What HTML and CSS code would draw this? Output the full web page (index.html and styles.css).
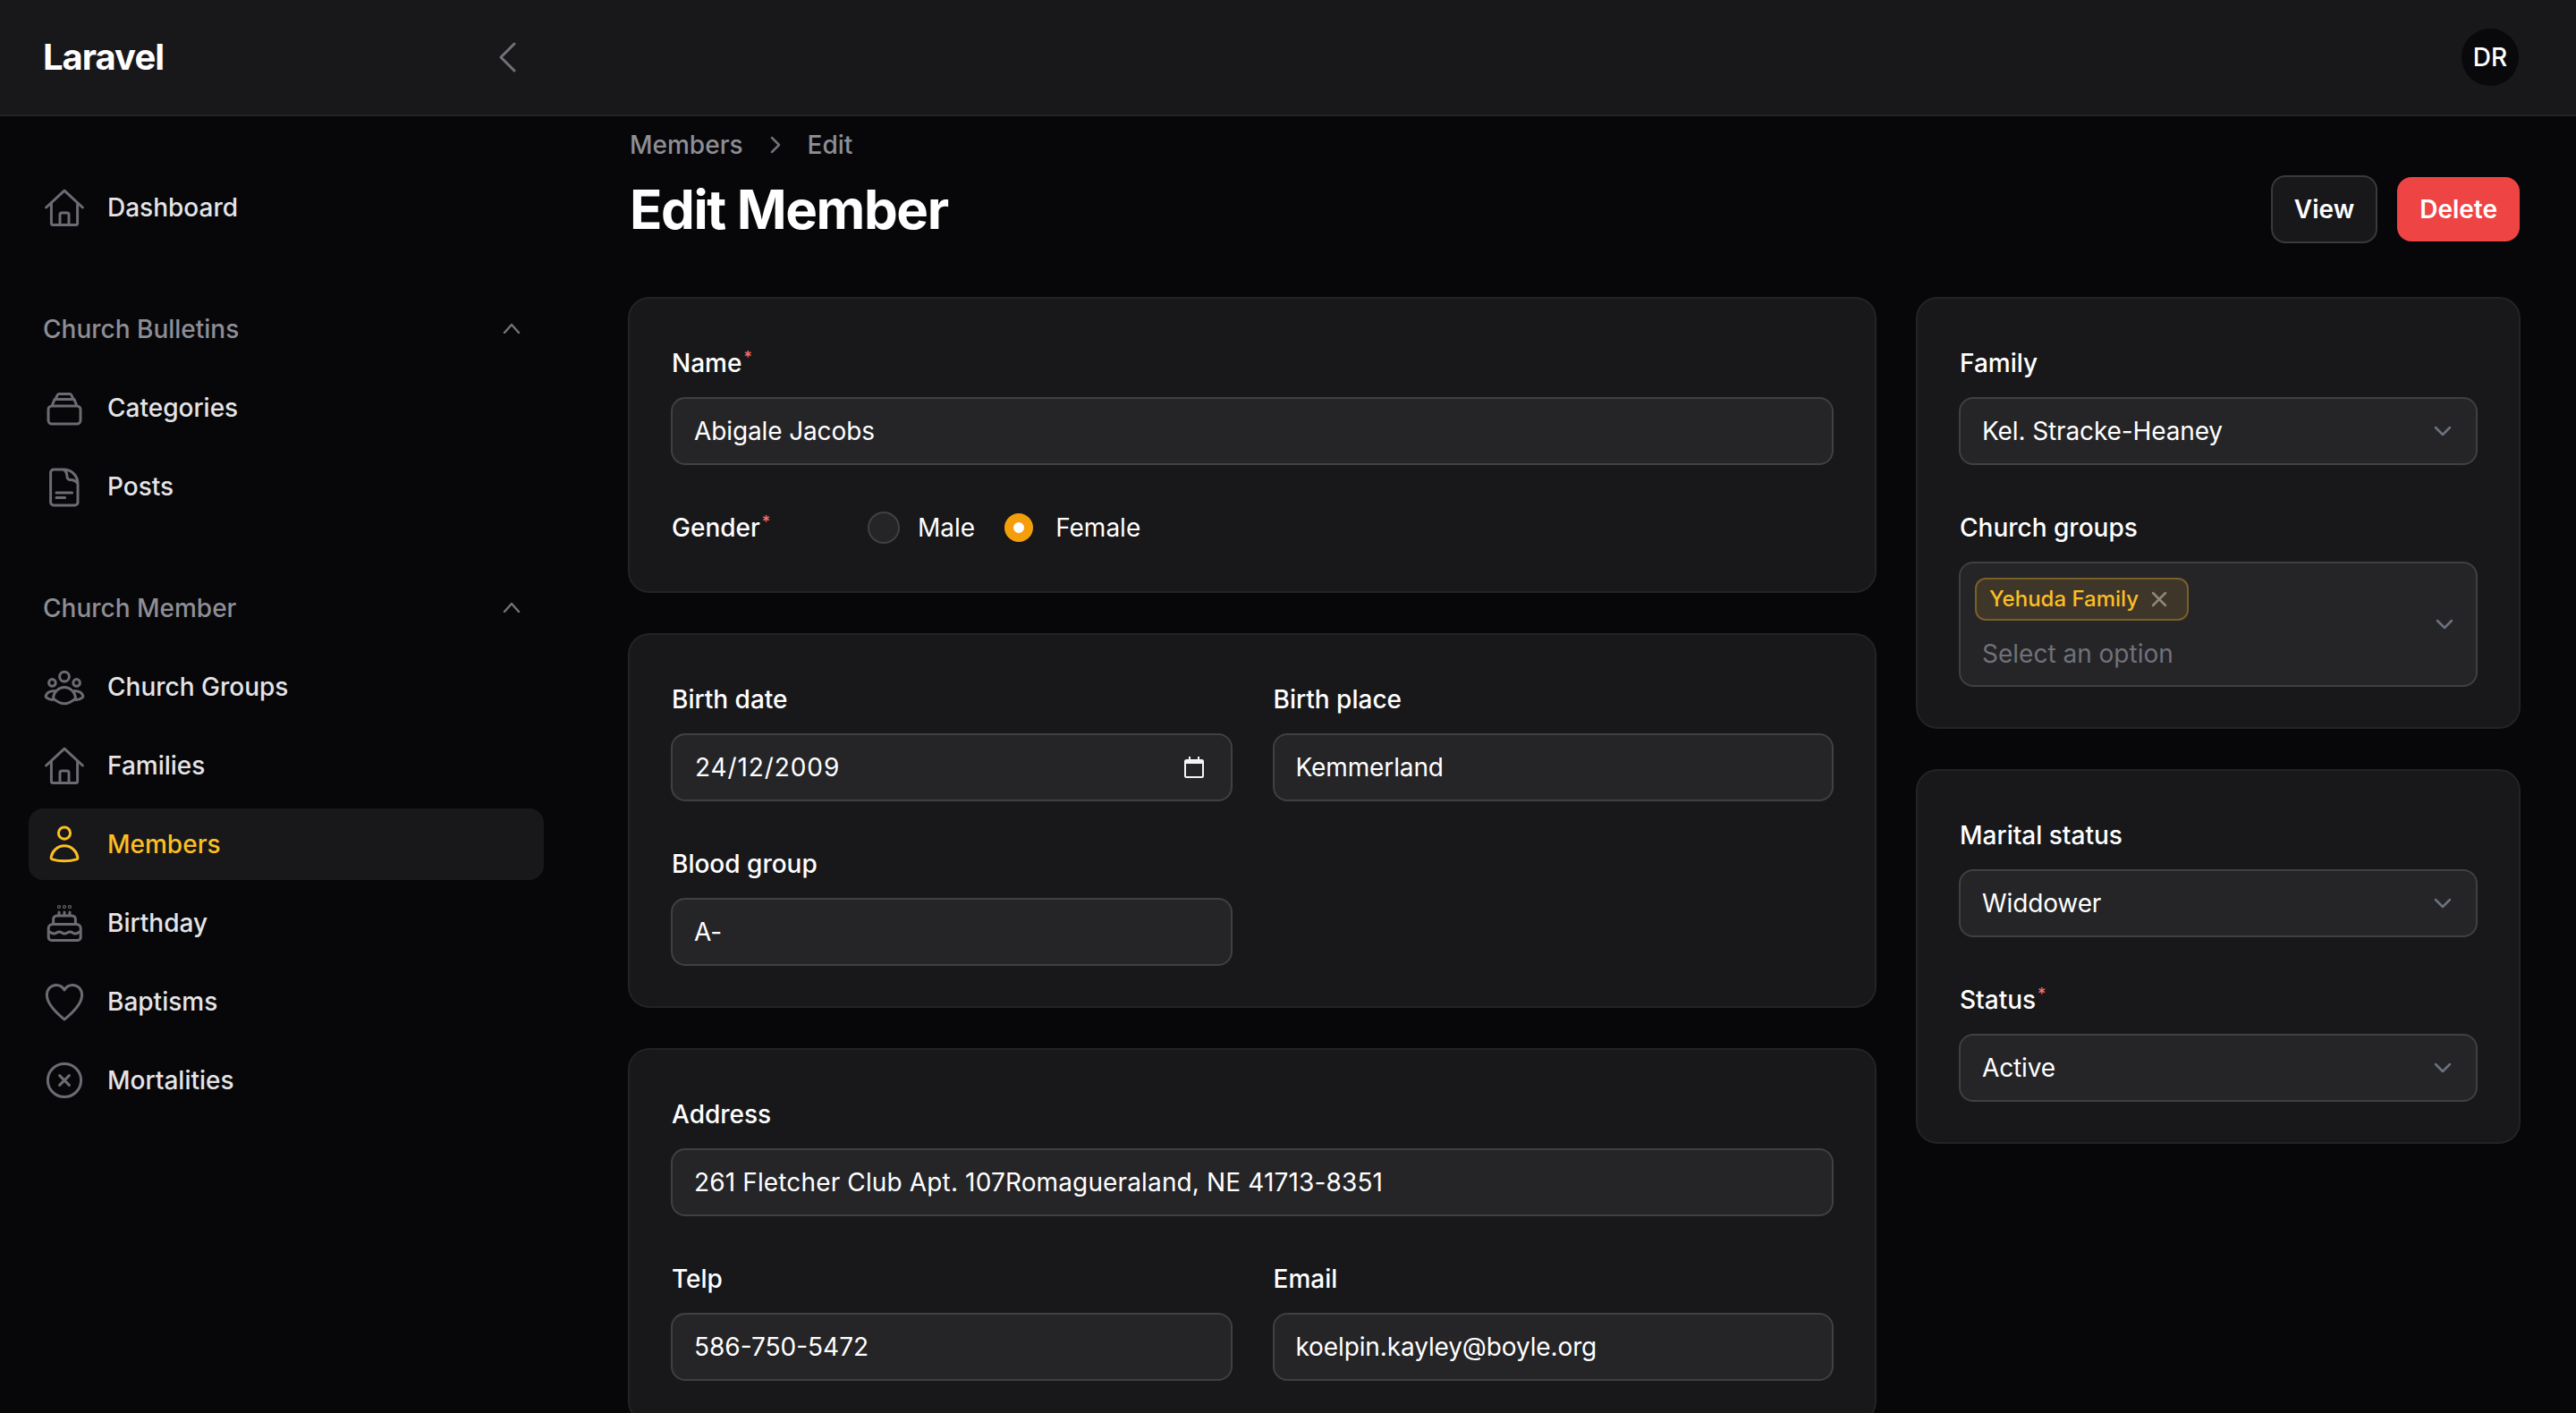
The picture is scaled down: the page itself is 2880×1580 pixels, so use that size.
FILE: index.html
```html
<!DOCTYPE html>
<html lang="en">
<head>
  <meta charset="utf-8">
  <title>Edit Member</title>
  <link rel="stylesheet" href="styles.css">
</head>
<body>
  <header class="topbar">
    <div class="brand">
      <span class="logo">Laravel</span>
      <svg class="collapse" viewBox="0 0 20 34"><path d="M18 2 3 17l15 15"/></svg>
    </div>
    <span class="avatar">DR</span>
  </header>

  <div class="shell">
    <nav class="sidebar">
      <a class="nav-item">
        <svg class="icon" viewBox="0 0 24 24"><path d="M1.8 12 12 2.600 22.200 12M4.700 9.600V20.800a1 1 0 0 0 1 1h12.600a1 1 0 0 0 1-1V9.600M9.500 21.800V16a1 1 0 0 1 1-1h3a1 1 0 0 1 1 1v5.800"/></svg>
        <span>Dashboard</span>
      </a>

      <div class="nav-group">
        <div class="nav-label">
          <span>Church Bulletins</span>
          <svg class="group-toggle" viewBox="0 0 20 12"><path d="m2 11 8-9 8 9"/></svg>
        </div>
        <a class="nav-item">
          <svg class="icon" viewBox="0 0 24 24"><path d="M3 13a2 2 0 0 1 2-2h14a2 2 0 0 1 2 2v6a2 2 0 0 1-2 2H5a2 2 0 0 1-2-2zM5 11l1.500-3.700h11L19 11M7 7.300l1-2.300a1.200 1.200 0 0 1 1-.7h6a1.200 1.200 0 0 1 1 .7l1 2.300"/></svg>
          <span>Categories</span>
        </a>
        <a class="nav-item">
          <svg class="icon" viewBox="0 0 24 24"><path d="M11.500 2.500H6a1.700 1.700 0 0 0-1.700 1.700v16.600A1.700 1.700 0 0 0 6 22.500h11.800a1.700 1.700 0 0 0 1.700-1.700V10.500C19.500 6 16 2.500 11.500 2.500zM11.500 2.500c1.500 1 2 2.500 2 4 0 1 .7 1.800 1.800 1.800 1.500 0 3 .5 4.200 2.200M7.500 15.500h8.800M7.500 18.300h4.800"/></svg>
          <span>Posts</span>
        </a>
      </div>

      <div class="nav-group">
        <div class="nav-label">
          <span>Church Member</span>
          <svg class="group-toggle" viewBox="0 0 20 12"><path d="m2 11 8-9 8 9"/></svg>
        </div>
        <a class="nav-item">
          <svg class="icon" viewBox="0 0 24 24"><circle cx="12" cy="6.300" r="2.700"/><circle cx="5.200" cy="9.700" r="1.900"/><circle cx="18.800" cy="9.700" r="1.900"/><path d="M12 12.300c-3.200 0-5.600 2.400-6.200 5.400-.1.500.1.900.5 1.200 1.600 1.300 3.500 2.500 5.700 2.500s4.100-1.200 5.700-2.500c.4-.3.600-.7.500-1.200-.6-3-3-5.400-6.200-5.400zM6.600 14.300c-2.600 0-4.400 1.200-5 2.700-.1.400 0 .7.3.9 1 .9 2.200 1.300 3.500 1.400M17.400 14.300c2.600 0 4.400 1.200 5 2.700.1.400 0 .7-.3.9-1 .9-2.200 1.300-3.500 1.400"/></svg>
          <span>Church Groups</span>
        </a>
        <a class="nav-item">
          <svg class="icon" viewBox="0 0 24 24"><path d="M1.800 12 12 2.600 22.200 12M4.700 9.600V20.800a1 1 0 0 0 1 1h12.600a1 1 0 0 0 1-1V9.600M9.500 21.800V16a1 1 0 0 1 1-1h3a1 1 0 0 1 1 1v5.800"/></svg>
          <span>Families</span>
        </a>
        <a class="nav-item active">
          <svg class="icon" viewBox="0 0 24 24"><circle cx="12" cy="5.800" r="3.300"/><path d="M12 12.900c-3.800 0-6.900 3-7.400 6.300-.1.600.1 1 .6 1.200 1.800.6 4.300 1 6.800 1s5-.4 6.800-1c.5-.2.700-.6.600-1.200-.5-3.300-3.600-6.300-7.400-6.300z"/></svg>
          <span>Members</span>
        </a>
        <a class="nav-item">
          <svg class="icon" viewBox="0 0 24 24"><path d="M3.100 15a2.300 2.300 0 0 1 2.300-2.300h13.400a2.300 2.300 0 0 1 2.300 2.300v5a1.700 1.700 0 0 1-1.700 1.700H4.800A1.700 1.700 0 0 1 3.100 20zM3.100 17c1.500 0 1.500 1 3 1s1.500-1 3-1 1.500 1 3 1 1.500-1 3-1 1.500 1 3 1 1.500-1 3-1M5.800 12.700V10a2 2 0 0 1 2-2h8.400a2 2 0 0 1 2 2v2.700M9 8V6M12 8V6M15 8V6"/><circle cx="9" cy="3" r=".3"/><circle cx="12" cy="3" r=".3"/><circle cx="15" cy="3" r=".3"/></svg>
          <span>Birthday</span>
        </a>
        <a class="nav-item">
          <svg class="icon" viewBox="0 0 24 24"><path d="M12 22c-1-.9-9.800-7.500-9.800-13.600C2.200 5 4.600 2.700 7.400 2.700c2 0 3.700 1.100 4.600 2.800.9-1.700 2.600-2.800 4.600-2.800 2.800 0 5.200 2.300 5.200 5.700C21.800 14.500 13 21.100 12 22z"/></svg>
          <span>Baptisms</span>
        </a>
        <a class="nav-item">
          <svg class="icon" viewBox="0 0 24 24"><circle cx="12" cy="12" r="9.300"/><path d="m9.300 9.300 5.400 5.400M14.700 9.300l-5.400 5.400"/></svg>
          <span>Mortalities</span>
        </a>
      </div>
    </nav>

    <main class="content">
      <div class="crumbs">
        <span>Members</span>
        <svg class="crumb-sep" viewBox="0 0 12 20"><path d="m2 2 8 8-8 8"/></svg>
        <span>Edit</span>
      </div>
      <div class="title-row">
        <h1>Edit Member</h1>
        <div class="actions">
          <button class="btn btn-view">View</button>
          <button class="btn btn-delete">Delete</button>
        </div>
      </div>

      <div class="columns">
        <div class="stack">
          <section class="card">
            <div class="field">
              <label>Name<sup>*</sup></label>
              <div class="input">Abigale Jacobs</div>
            </div>
            <div class="gender">
              <label>Gender<sup>*</sup></label>
              <span class="radio"></span>
              <span class="radio-text male">Male</span>
              <span class="radio checked"></span>
              <span class="radio-text">Female</span>
            </div>
          </section>

          <section class="card">
            <div class="grid-2">
              <div class="field">
                <label>Birth date</label>
                <div class="input input-date">
                  <span>24/12/2009</span>
                  <svg class="calendar" viewBox="0 0 22 24"><path d="M5 0h2v3h8V0h2v3h2.500A2.500 2.500 0 0 1 22 5.500v16a2.500 2.500 0 0 1-2.500 2.500h-17A2.500 2.500 0 0 1 0 21.500v-16A2.500 2.500 0 0 1 2.500 3H5zM2 8v13.500a.5.500 0 0 0 .5.500h17a.5.500 0 0 0 .5-.5V8z"/></svg>
                </div>
              </div>
              <div class="field">
                <label>Birth place</label>
                <div class="input">Kemmerland</div>
              </div>
              <div class="field">
                <label>Blood group</label>
                <div class="input">A-</div>
              </div>
            </div>
          </section>

          <section class="card">
            <div class="field">
              <label>Address</label>
              <div class="input input-numeric">261 Fletcher Club Apt. 107Romagueraland, NE 41713-8351</div>
            </div>
            <div class="grid-2">
              <div class="field">
                <label>Telp</label>
                <div class="input input-phone">586-750-5472</div>
              </div>
              <div class="field">
                <label>Email</label>
                <div class="input">koelpin.kayley@boyle.org</div>
              </div>
            </div>
          </section>
        </div>

        <div class="stack">
          <section class="card">
            <div class="field">
              <label>Family</label>
              <div class="input select">
                <span>Kel. Stracke-Heaney</span>
                <svg class="select-arrow" viewBox="0 0 20 12"><path d="m2 2 8 8 8-8"/></svg>
              </div>
            </div>
            <div class="field">
              <label>Church groups</label>
              <div class="multi">
                <div class="tag">
                  <span>Yehuda Family</span>
                  <svg class="tag-x" viewBox="0 0 18 18"><path d="m2 2 14 14M16 2 2 16"/></svg>
                </div>
                <span class="placeholder">Select an option</span>
                <svg class="select-arrow multi-arrow" viewBox="0 0 20 12"><path d="m2 2 8 8 8-8"/></svg>
              </div>
            </div>
          </section>

          <section class="card">
            <div class="field">
              <label>Marital status</label>
              <div class="input select">
                <span>Widdower</span>
                <svg class="select-arrow" viewBox="0 0 20 12"><path d="m2 2 8 8 8-8"/></svg>
              </div>
            </div>
            <div class="field">
              <label>Status<sup>*</sup></label>
              <div class="input select">
                <span>Active</span>
                <svg class="select-arrow" viewBox="0 0 20 12"><path d="m2 2 8 8 8-8"/></svg>
              </div>
            </div>
          </section>
        </div>
      </div>
    </main>
  </div>
</body>
</html>
```

FILE: styles.css
```css
* {
  box-sizing: border-box;
}

html, body {
  height: 1580px;
  margin: 0;
  overflow: hidden;
}

body {
  font-family: Inter, "Liberation Sans", sans-serif;
  font-size: 28px;
  line-height: 40px;
  color: #fff;
  background-color: #070709;
}

svg {
  display: block;
  fill: none;
  stroke-linecap: round;
  stroke-linejoin: round;
}

/* top bar */
.topbar {
  display: flex;
  align-items: center;
  justify-content: space-between;
  height: 130px;
  padding: 0 64px 0 48px;
  background-color: #18181b;
  border-bottom: 2px solid #232326;
}

.brand {
  display: flex;
  align-items: center;
  justify-content: space-between;
  width: 529px;
}

.logo {
  font-size: 40px;
  font-weight: 700;
  letter-spacing: -1px;
}

.collapse {
  width: 20px;
  height: 34px;
  stroke: #71717a;
  stroke-width: 3;
}

.avatar {
  display: flex;
  align-items: center;
  justify-content: center;
  width: 64px;
  height: 64px;
  border-radius: 50%;
  background-color: #09090b;
  font-weight: 500;
}

/* sidebar */
.shell {
  display: flex;
}

.sidebar {
  display: flex;
  flex-direction: column;
  gap: 56px;
  flex: 0 0 702px;
  padding: 62px 94px 0 32px;
}

.nav-group {
  display: flex;
  flex-direction: column;
  gap: 8px;
}

.nav-label {
  display: flex;
  align-items: center;
  justify-content: space-between;
  height: 80px;
  padding: 0 26px 0 16px;
  color: #8e8e96;
  font-weight: 500;
}

.group-toggle {
  width: 20px;
  height: 12px;
  margin-bottom: 3px;
  stroke: #71717a;
  stroke-width: 2.5;
}

.nav-item {
  display: flex;
  align-items: center;
  gap: 24px;
  height: 80px;
  padding: 0 16px;
  border-radius: 16px;
  color: #e4e4e7;
  font-weight: 500;
}

.nav-item.active {
  background-color: #18181b;
  color: #fbbf24;
}

.icon {
  width: 48px;
  height: 48px;
  stroke: #6b6b73;
  stroke-width: 1.5;
}

.active .icon {
  stroke: #fbbf24;
}

/* main column */
.content {
  flex: 0 0 2116px;
  padding-top: 12px;
}

.crumbs {
  display: flex;
  align-items: center;
  gap: 30px;
  padding-left: 2px;
  margin-bottom: 14px;
  color: #8e8e96;
  font-weight: 500;
}

.crumb-sep {
  width: 12px;
  height: 20px;
  stroke: #71717a;
  stroke-width: 2.5;
}

.title-row {
  display: flex;
  align-items: center;
  justify-content: space-between;
  height: 76px;
  padding: 0 1px 0 2px;
  margin-bottom: 60px;
}

h1 {
  margin: 0;
  font-size: 60px;
  line-height: 72px;
  font-weight: 700;
  letter-spacing: -1.4px;
}

.actions {
  display: flex;
  align-items: center;
  gap: 22px;
}

.btn {
  font: 600 28px/40px Inter, "Liberation Sans", sans-serif;
  color: #fff;
  border-radius: 16px;
}

.btn-view {
  height: 76px;
  padding: 0 24px;
  background-color: #18181b;
  border: 2px solid #3a3a3e;
}

.btn-delete {
  height: 72px;
  padding: 0 25px;
  background-color: #ef4444;
  border: 0;
}

.columns {
  display: grid;
  grid-template-columns: 1396px 676px;
  gap: 44px;
  align-items: start;
}

.stack {
  display: flex;
  flex-direction: column;
  gap: 45px;
}

.card {
  display: flex;
  flex-direction: column;
  gap: 50px;
  padding: 52px 46px 45px;
  background-color: #18181b;
  border: 2px solid #232326;
  border-radius: 24px;
}

.grid-2 {
  display: grid;
  grid-template-columns: 1fr 1fr;
  gap: 50px 45px;
}

.field {
  display: flex;
  flex-direction: column;
  gap: 18px;
  min-width: 0;
}

label {
  padding-left: 1px;
  font-weight: 500;
}

sup {
  margin-left: 2px;
  color: #f87171;
  font-size: 18px;
  line-height: 0;
}

.input {
  display: flex;
  align-items: center;
  height: 76px;
  padding: 0 24px;
  background-color: #252528;
  border: 2px solid #404044;
  border-radius: 16px;
  letter-spacing: -.12px;
}

.input-numeric {
  letter-spacing: .14px;
}

.input-phone {
  letter-spacing: 0;
}

.input-date,
.select {
  justify-content: space-between;
}

.input-date span {
  padding-left: 1px;
  letter-spacing: .9px;
}

.calendar {
  width: 22px;
  height: 24px;
  margin-right: 6px;
  fill: #f4f4f5;
  stroke: none;
}

.select-arrow {
  flex: none;
  width: 20px;
  height: 12px;
  margin-right: 3px;
  stroke: #6b7280;
  stroke-width: 2.5;
}

.gender {
  display: flex;
  align-items: center;
  height: 46px;
  padding-bottom: 6px;
}

.gender label {
  width: 220px;
}

.radio {
  width: 36px;
  height: 36px;
  border-radius: 50%;
  background-color: #252528;
  border: 2px solid #404044;
}

.radio.checked {
  width: 32px;
  height: 32px;
  margin-right: 5px;
  border: 10px solid #f59e0b;
  background-color: #fff;
}

.radio-text {
  margin-left: 20px;
}

.radio-text.male {
  margin-right: 33px;
}

.multi {
  position: relative;
  display: flex;
  flex-direction: column;
  align-items: flex-start;
  height: 140px;
  padding: 16px 16px 0;
  background-color: #252528;
  border: 2px solid #404044;
  border-radius: 16px;
}

.tag {
  display: flex;
  align-items: center;
  gap: 14px;
  height: 48px;
  padding: 0 22px 0 14px;
  background-color: #3f362a;
  border: 2px solid #7a5f27;
  border-radius: 12px;
  color: #fbbf24;
  font-size: 24px;
  font-weight: 500;
}

.tag-x {
  width: 18px;
  height: 18px;
  stroke: #8f8878;
  stroke-width: 2.5;
}

.placeholder {
  margin: 17px 0 0 8px;
  color: #71717a;
}

.multi-arrow {
  position: absolute;
  top: 62px;
  right: 25px;
  margin: 0;
}
```
